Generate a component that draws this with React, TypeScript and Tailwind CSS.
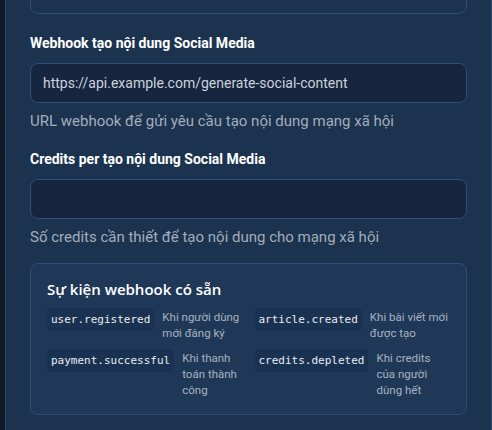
const events = [
  { code: 'user.registered', desc: 'Khi người dùng mới đăng ký' },
  { code: 'article.created', desc: 'Khi bài viết mới được tạo' },
  { code: 'payment.successful', desc: 'Khi thanh toán thành công' },
  { code: 'credits.depleted', desc: 'Khi credits của người dùng hết' },
];

export default function App() {
  return (
    <div className="flex h-[430px] w-[492px] overflow-hidden bg-[#111a2b] font-['Roboto',sans-serif]">
      <div className="ml-[5px] h-full flex-1 border-x border-[#2a4a72] bg-[#1c3350] px-[24px]">
        {/* previous field (cut off) */}
        <div className="mt-[-26px] h-[40px] rounded-lg border border-[#2c4e78] bg-[#1c3350]" />

        {/* Webhook field */}
        <div className="mt-[19px]">
          <label className="block text-[14px] font-bold leading-5 text-white">
            Webhook tạo nội dung Social Media
          </label>
          <div className="mt-[10px] flex h-[40px] items-center rounded-lg border border-[#2c4e78] bg-[#16263e] px-3 text-[14px] text-[#cbd2dc]">
            https://api.example.com/generate-social-content
          </div>
          <p className="mt-[8px] text-[15px] leading-5 text-[#a3adbb]">
            URL webhook để gửi yêu cầu tạo nội dung mạng xã hội
          </p>
        </div>

        {/* Credits field */}
        <div className="mt-[18px]">
          <label className="block text-[14px] font-bold leading-5 text-white">
            Credits per tạo nội dung Social Media
          </label>
          <div className="mt-[10px] h-[40px] rounded-lg border border-[#2c4e78] bg-[#16263e]" />
          <p className="mt-[8px] text-[15px] leading-5 text-[#a3adbb]">
            Số credits cần thiết để tạo nội dung cho mạng xã hội
          </p>
        </div>

        {/* Events box */}
        <div className="mt-[16px] rounded-lg border border-[#2c4e78] bg-[#1f3858] px-4 pb-[16px] pt-[15px]">
          <h3 className="font-['Open_Sans',sans-serif] text-[15px] font-semibold leading-5 text-white">
            Sự kiện webhook có sẵn
          </h3>
          <div className="mt-[9px] grid grid-cols-2 gap-x-3 gap-y-2">
            {events.map((e) => (
              <div key={e.code} className="flex items-start gap-2">
                <code className="shrink-0 rounded bg-[#1a3252] px-1 py-[4px] font-['DejaVu_Sans_Mono',monospace] text-[11px] leading-[15px] text-[#e8ecf2]">
                  {e.code}
                </code>
                <span className="pt-[1px] text-[11.5px] leading-4 text-[#a8b2c0]">{e.desc}</span>
              </div>
            ))}
          </div>
        </div>

        {/* next element (cut off) */}
        <div className="mt-[16px] h-[20px] rounded-t-lg border-t border-[#2c4e78]" />
      </div>
    </div>
  );
}
